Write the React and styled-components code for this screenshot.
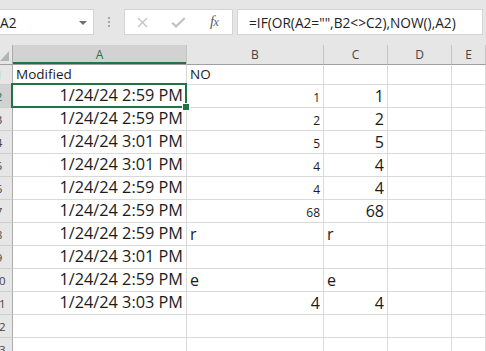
import React from "react";
import styled, { createGlobalStyle } from "styled-components";

const Global = createGlobalStyle`
  html, body { margin: 0; padding: 0; background: #fff; overflow: hidden; }
  body { font-family: "Open Sans", "Noto Sans", sans-serif; }
`;

const GREEN = "#217346";
const COLS = "13px 174px 137px 64px 64px 1fr";

const Screen = styled.div`
  width: 486px;
  height: 351px;
  overflow: hidden;
  background: #e6e6e6;
  display: flex;
  flex-direction: column;
`;

const FormulaBar = styled.div`
  height: 45px;
  box-sizing: border-box;
  padding-top: 9px;
  display: flex;
  align-items: flex-start;
  flex-shrink: 0;
`;

const NameBox = styled.div`
  width: 94px;
  height: 26px;
  box-sizing: border-box;
  background: #fff;
  border: 1px solid #d4d4d4;
  border-left: none;
  display: flex;
  align-items: center;
  justify-content: space-between;
  padding: 1px 6px 0 0;
  font-size: 13.7px;
  color: #222;
`;

const DropArrow = styled.span`
  width: 0;
  height: 0;
  border-left: 4px solid transparent;
  border-right: 4px solid transparent;
  border-top: 4px solid #6e6e6e;
`;

const Grip = styled.div`
  width: 30px;
  height: 26px;
  display: flex;
  flex-direction: column;
  align-items: center;
  justify-content: center;
  gap: 2px;
`;

const GripDot = styled.span`
  width: 2px;
  height: 2px;
  background: #a6a6a6;
`;

const ActionBox = styled.div`
  width: 109px;
  height: 26px;
  box-sizing: border-box;
  background: #fff;
  border: 1px solid #d4d4d4;
  display: flex;
`;

const ActionButton = styled.div`
  flex: 1;
  display: flex;
  align-items: center;
  justify-content: center;
`;

const Fx = styled.span`
  font-family: "Liberation Serif", "DejaVu Serif", serif;
  font-style: italic;
  font-size: 15px;
  color: #5f5f5f;
  letter-spacing: -0.5px;
  margin-top: -1px;
  small { font-size: 12px; }
`;

const FormulaInput = styled.div`
  margin-left: 4px;
  width: 246px;
  height: 26px;
  box-sizing: border-box;
  background: #fff;
  border: 1px solid #d4d4d4;
  padding: 2px 0 0 11px;
  font-size: 13.7px;
  line-height: 22px;
  color: #222;
  white-space: nowrap;
`;

const Sheet = styled.div`
  position: relative;
  flex: 1;
  background: #fff;
`;

const HeaderRow = styled.div`
  display: grid;
  grid-template-columns: ${COLS};
  height: 20px;
  background: #e6e6e6;
`;

const Corner = styled.div`
  box-sizing: border-box;
  border-right: 1px solid #ababab;
  border-bottom: 1px solid #9f9f9f;
  display: flex;
  align-items: flex-end;
  padding: 0 0 3px 0;
`;

const ColHeader = styled.div`
  box-sizing: border-box;
  border-right: 1px solid #c4c4c4;
  border-bottom: 1px solid #9f9f9f;
  background: ${(p) => (p.$selected ? "#d2d2d2" : "#e6e6e6")};
  box-shadow: ${(p) => (p.$selected ? `inset 0 -2px 0 ${GREEN}` : "none")};
  color: ${(p) => (p.$selected ? GREEN : "#444")};
  font-size: 12px;
  display: flex;
  align-items: center;
  justify-content: center;
  padding-bottom: 1px;
`;

const Row = styled.div`
  display: grid;
  grid-template-columns: ${COLS};
  height: ${(p) => p.$h}px;
`;

const RowHeader = styled.div`
  box-sizing: border-box;
  border-right: 1px solid #ababab;
  border-bottom: 1px solid #cfcfcf;
  background: ${(p) => (p.$selected ? "#d2d2d2" : "#e6e6e6")};
  color: ${(p) => (p.$selected ? GREEN : "#444")};
  font-size: 11.5px;
  overflow: hidden;
  display: flex;
  align-items: center;
`;

const RowNum = styled.span`
  flex: none;
  width: 26px;
  margin-left: -14px;
  text-align: center;
`;

const Cell = styled.div`
  box-sizing: border-box;
  border-right: 1px solid #d9d9d9;
  border-bottom: 1px solid #d9d9d9;
  display: flex;
  align-items: flex-end;
  justify-content: ${(p) => (p.$align === "right" ? "flex-end" : "flex-start")};
  padding: 0 3px ${(p) => p.$pb}px;
  font-size: ${(p) => p.$size}px;
  line-height: 1.2;
  color: #1b1b1b;
  white-space: nowrap;
  overflow: hidden;
`;

const Selection = styled.div`
  position: absolute;
  left: 11px;
  top: 38px;
  width: 176px;
  height: 25px;
  box-sizing: border-box;
  border: 2px solid ${GREEN};
  pointer-events: none;
`;

const FillHandle = styled.div`
  position: absolute;
  left: 182px;
  top: 58px;
  width: 8px;
  height: 8px;
  box-sizing: border-box;
  background: ${GREEN};
  border: 1px solid #fff;
`;

const D = (t) => ({ t, al: "right", fs: 16.3, pb: 1 });
const S = (t) => ({ t, al: "right", fs: 12, pb: 2 });
const N = (t) => ({ t, al: "right", fs: 16, pb: 1 });
const L = (t, fs = 16, pb = 1) => ({ t, al: "left", fs, pb });

const rows = [
  [L("Modified", 13.5, 2), L("NO", 13.5, 2)],
  [D("1/24/24 2:59 PM"), S("1"), N("1")],
  [D("1/24/24 2:59 PM"), S("2"), N("2")],
  [D("1/24/24 3:01 PM"), S("5"), N("5")],
  [D("1/24/24 3:01 PM"), S("4"), N("4")],
  [D("1/24/24 2:59 PM"), S("4"), N("4")],
  [D("1/24/24 2:59 PM"), S("68"), N("68")],
  [D("1/24/24 2:59 PM"), L("r"), L("r")],
  [D("1/24/24 3:01 PM")],
  [D("1/24/24 2:59 PM"), L("e"), L("e")],
  [D("1/24/24 3:03 PM"), N("4"), N("4")],
  [],
  [],
];

const letters = ["A", "B", "C", "D", "E"];

export default function App() {
  return (
    <Screen>
      <Global />
      <FormulaBar>
        <NameBox>
          <span>A2</span>
          <DropArrow />
        </NameBox>
        <Grip>
          <GripDot />
          <GripDot />
          <GripDot />
        </Grip>
        <ActionBox>
          <ActionButton>
            <svg width="11" height="11" viewBox="0 0 11 11">
              <path d="M1 1L10 10M10 1L1 10" stroke="#c3c3c3" strokeWidth="1.4" fill="none" />
            </svg>
          </ActionButton>
          <ActionButton>
            <svg width="15" height="11" viewBox="0 0 15 11">
              <path d="M1.2 5.8L5 9.4L13.8 1" stroke="#c3c3c3" strokeWidth="2.2" fill="none" />
            </svg>
          </ActionButton>
          <ActionButton>
            <Fx>
              f<small>x</small>
            </Fx>
          </ActionButton>
        </ActionBox>
        <FormulaInput>=IF(OR(A2="",B2&lt;&gt;C2),NOW(),A2)</FormulaInput>
      </FormulaBar>
      <Sheet>
        <HeaderRow>
          <Corner>
            <svg width="9" height="10" viewBox="0 0 9 10">
              <path d="M0 10L9 10L9 0Z" fill="#b4b4b4" />
            </svg>
          </Corner>
          {letters.map((l, i) => (
            <ColHeader key={l} $selected={i === 0}>
              {l}
            </ColHeader>
          ))}
        </HeaderRow>
        {rows.map((cells, r) => (
          <Row key={r} $h={r === 0 ? 20 : 23}>
            <RowHeader $selected={r === 1}>
              <RowNum>{r + 1}</RowNum>
            </RowHeader>
            {[0, 1, 2, 3, 4].map((c) => {
              const cell = cells[c];
              return (
                <Cell
                  key={c}
                  $align={cell ? cell.al : "left"}
                  $size={cell ? cell.fs : 16}
                  $pb={cell ? cell.pb : 1}
                >
                  {cell ? cell.t : ""}
                </Cell>
              );
            })}
          </Row>
        ))}
        <Selection />
        <FillHandle />
      </Sheet>
    </Screen>
  );
}
